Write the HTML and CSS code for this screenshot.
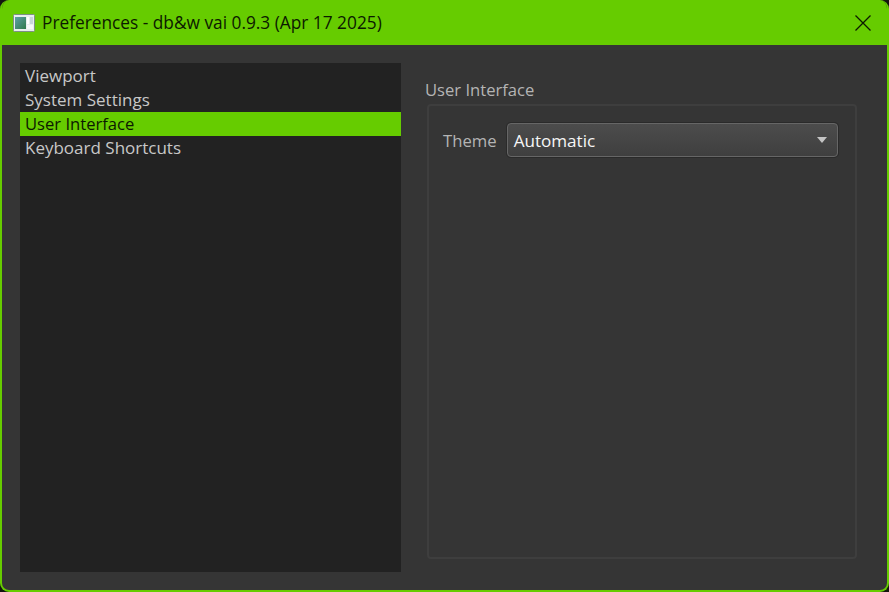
FILE: index.html
```html
<!DOCTYPE html>
<html lang="en">
<head>
<meta charset="utf-8">
<title>Preferences - db&amp;w vai 0.9.3 (Apr 17 2025)</title>
<link rel="stylesheet" href="styles.css">
</head>
<body>
<div class="window">
  <header class="titlebar">
    <svg class="app-icon" width="22" height="18" viewBox="0 0 22 18">
      <rect x="0.5" y="0.5" width="21" height="17" rx="1" fill="#e8eeee" stroke="#7d8f86"/>
      <defs><linearGradient id="g" x1="0" y1="0" x2="1" y2="1"><stop offset="0" stop-color="#5fa0a8"/><stop offset="1" stop-color="#2f7a4a"/></linearGradient></defs>
      <rect x="2" y="3" width="11" height="12" fill="url(#g)"/>
      <rect x="14" y="3" width="2" height="7" fill="#fff"/>
      <rect x="17" y="3" width="3" height="7" fill="#c8d6d8"/>
      <rect x="14" y="11" width="6" height="4" fill="#f6f8f8"/>
    </svg>
    <span class="title">Preferences - db&amp;w vai 0.9.3 (Apr 17 2025)</span>
    <svg class="close" width="16" height="16" viewBox="0 0 16 16">
      <path d="M0.5 0.5L15.5 15.5M15.5 0.5L0.5 15.5" stroke="#0c1a00" stroke-width="1.3" fill="none"/>
    </svg>
  </header>
  <main class="content">
    <ul class="nav">
      <li class="nav-item">Viewport</li>
      <li class="nav-item">System Settings</li>
      <li class="nav-item selected">User Interface</li>
      <li class="nav-item">Keyboard Shortcuts</li>
    </ul>
    <section class="panel">
      <h2 class="panel-title">User Interface</h2>
      <div class="group">
        <div class="row">
          <span class="row-label">Theme</span>
          <div class="combo">
            <span class="combo-value">Automatic</span>
            <span class="combo-arrow"></span>
          </div>
        </div>
      </div>
    </section>
  </main>
</div>
</body>
</html>
```
FILE: styles.css
```css
* { box-sizing: border-box; }
html, body { margin: 0; padding: 0; height: 100%; background: #14160f; overflow: hidden; }
body { font-family: "Open Sans", "Noto Sans", sans-serif; font-size: 16.5px; }
.window {
  width: 889px; height: 592px;
  display: flex; flex-direction: column;
  background: #353535;
  border: 2px solid #66cc00;
  border-top: 0;
  border-radius: 9px;
  overflow: hidden;
}
.titlebar {
  height: 45px; flex: none;
  background: #66cc00;
  margin: 0 -2px;
  padding: 0 18px 0 13px;
  display: flex; align-items: center;
  color: #0c1a00;
}
.app-icon { flex: none; margin-right: 7px; }
.title { flex: 1; white-space: nowrap; font-size: 17.3px; }
.close { flex: none; }
.content {
  flex: 1; min-height: 0;
  display: flex;
  padding: 18px 30px 18px 18px;
}
.nav {
  list-style: none; margin: 0; padding: 1px 0 0;
  width: 381px; flex: none;
  background: #222222;
  border: 0;
}
.nav-item {
  height: 24px; line-height: 24px;
  padding-left: 5px;
  color: #c8c8c8;
  white-space: nowrap;
  font-size: 17px;
}
.selected { background: #66cc00; color: #0c1a00; font-size: 16.6px; }
.panel {
  flex: 1; min-width: 0;
  margin-left: 24px;
  padding-bottom: 13px;
  display: flex; flex-direction: column;
}
.panel-title {
  margin: 15px 0 0; padding: 0;
  height: 26px; line-height: 24px;
  font-size: 16.6px; font-weight: 400;
  color: #b4b4b4;
  white-space: nowrap;
}
.group {
  flex: 1;
  margin-left: 2px;
  border: 2px solid #3e3e3e;
  border-radius: 4px;
  padding: 17px 17px 0 14px;
}
.row { display: flex; align-items: center; gap: 10px; }
.row-label { color: #b4b4b4; white-space: nowrap; font-size: 16.7px; }
.combo {
  flex: 1; height: 34px;
  display: flex; align-items: center; justify-content: space-between;
  padding: 0 10px 0 6px;
  background: linear-gradient(#4c4c4c, #3f3f3f);
  border: 1px solid #666666;
  border-radius: 4px;
  box-shadow: 0 0 0 1px #2a2a2a;
  color: #f6f6f6;
  font-size: 17.1px;
}
.combo-arrow {
  width: 0; height: 0;
  border-left: 5.5px solid transparent;
  border-right: 5.5px solid transparent;
  border-top: 6px solid #c4c4c4;
}
```
